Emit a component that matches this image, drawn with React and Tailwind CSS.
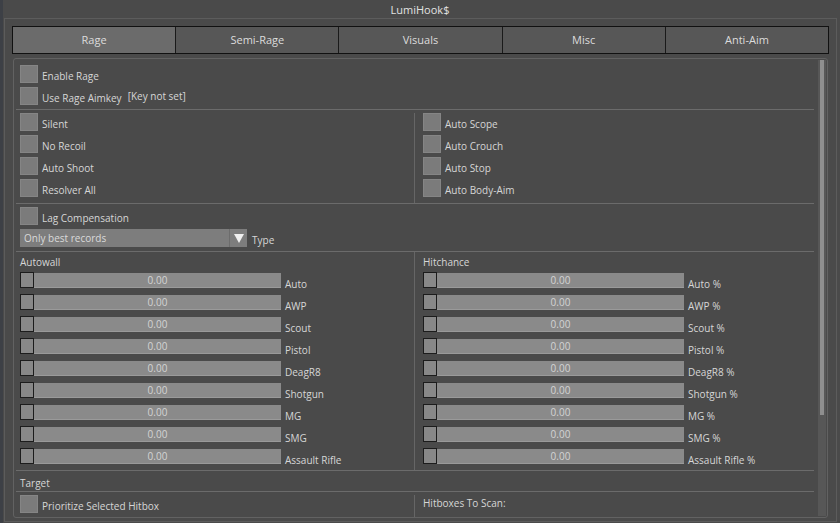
const tabs = ['Rage', 'Semi-Rage', 'Visuals', 'Misc', 'Anti-Aim']

const leftChecks = ['Silent', 'No Recoil', 'Auto Shoot', 'Resolver All']
const rightChecks = ['Auto Scope', 'Auto Crouch', 'Auto Stop', 'Auto Body-Aim']
const weapons = ['Auto', 'AWP', 'Scout', 'Pistol', 'DeagR8', 'Shotgun', 'MG', 'SMG', 'Assault Rifle']

function Check({ label, extra }) {
  return (
    <div className="h-[22px] flex items-start">
      <div className="w-[18px] h-[18px] bg-[#7b7b7b] border border-[#858585] shrink-0" />
      <span className="ml-[4px] mt-[4px] leading-[14px] text-[#d6d6d6]">{label}</span>
      {extra && <span className="ml-[6px] mt-[2px] leading-[14px] text-[#d6d6d6]">{extra}</span>}
    </div>
  )
}

function Slider({ label }) {
  return (
    <div className="h-[22px] flex items-start">
      <div className="w-[14px] h-[16px] bg-[#888] border border-[#1c1c1c] shrink-0" />
      <div className="w-[247px] h-[15px] mt-[1px] bg-[#8a8a8a] border-b border-[#9a9a9a] flex items-center justify-center text-[10px] text-[#d4d4d4] leading-none">
        0.00
      </div>
      <span className="ml-[4px] mt-[5px] leading-[14px] text-[#d6d6d6]">{label}</span>
    </div>
  )
}

function Sep() {
  return <div className="h-px bg-[#6b6b6b] mr-[4px]" />
}

export default function App() {
  return (
    <div className="w-[840px] h-[523px] bg-[#4a4a4a] text-[10px] text-[#d6d6d6] overflow-hidden flex flex-col border-l-[3px] border-[#3d4046]" style={{ fontFamily: '"Open Sans", sans-serif' }}>
      <div className="h-[18px] pt-[2px] flex items-center justify-center text-[11px] text-[#e2e2e2] pr-[3px]">LumiHook$</div>
      <div className="flex-1 ml-[1px] mr-[3px] mb-[4px] border border-[#5c5c5c] flex flex-col pl-[7px] pr-[7px] pt-[7px]">
        <div className="h-[28px] flex border border-[#111] shrink-0">
          {tabs.map((t, i) => (
            <div key={t} className={`flex-1 flex items-center justify-center text-[11px] text-[#dcdcdc] ${i > 0 ? 'border-l border-[#1a1a1a]' : ''} ${i === 0 ? 'bg-[#6b6b6b]' : 'bg-[#575757]'}`}>
              {t}
            </div>
          ))}
        </div>
        <div className="flex-1 mt-[4px] mb-[3px] ml-[1px] mr-[1px] border border-[#626262] rounded-[3px] flex overflow-hidden">
          <div className="flex-1 pl-[2px] flex flex-col">
            <div className="pl-[4px] pt-[6px]">
              <Check label="Enable Rage" />
              <Check label="Use Rage Aimkey" extra="[Key not set]" />
            </div>
            <Sep />
            <div className="flex pt-[3px] h-[93px]">
              <div className="w-[399px] pl-[4px] border-r border-[#666]">
                {leftChecks.map(l => <Check key={l} label={l} />)}
              </div>
              <div className="pl-[8px]">
                {rightChecks.map(l => <Check key={l} label={l} />)}
              </div>
            </div>
            <Sep />
            <div className="pl-[4px] pt-[3px] h-[47px]">
              <Check label="Lag Compensation" />
              <div className="flex items-start">
                <div className="w-[227px] h-[18px] bg-[#7d7d7d] flex">
                  <span className="flex-1 pl-[4px] leading-[19px] text-[#dadada]">Only best records</span>
                  <div className="w-[18px] border-l border-[#6c6c6c] flex items-center justify-center">
                    <svg width="10" height="9" viewBox="0 0 10 9"><path d="M0 0h10L5 9z" fill="#f0f0f0" /></svg>
                  </div>
                </div>
                <span className="ml-[5px] mt-[4px] leading-[14px]">Type</span>
              </div>
            </div>
            <Sep />
            <div className="flex h-[218px]">
              <div className="w-[399px] pl-[4px] border-r border-[#666] pt-[3px]">
                <div className="h-[14px] leading-[14px] mb-[3px]">Autowall</div>
                {weapons.map(w => <Slider key={w} label={w} />)}
              </div>
              <div className="pl-[8px] pt-[3px]">
                <div className="h-[14px] leading-[14px] mb-[3px]">Hitchance</div>
                {weapons.map(w => <Slider key={w} label={`${w} %`} />)}
              </div>
            </div>
            <Sep />
            <div className="h-[20px] pl-[4px] pt-[5px] leading-[14px]">Target</div>
            <Sep />
            <div className="flex pt-[3px] flex-1">
              <div className="w-[399px] pl-[4px] border-r border-[#666]">
                <Check label="Prioritize Selected Hitbox" />
              </div>
              <div className="pl-[8px] pt-[1px] leading-[14px]">Hitboxes To Scan:</div>
            </div>
          </div>
          <div className="w-[8px] bg-[#575757] mr-[1px] my-[1px] flex justify-center">
            <div className="w-[4px] h-[355px] bg-[#8e8e8e]" />
          </div>
        </div>
      </div>
    </div>
  )
}
